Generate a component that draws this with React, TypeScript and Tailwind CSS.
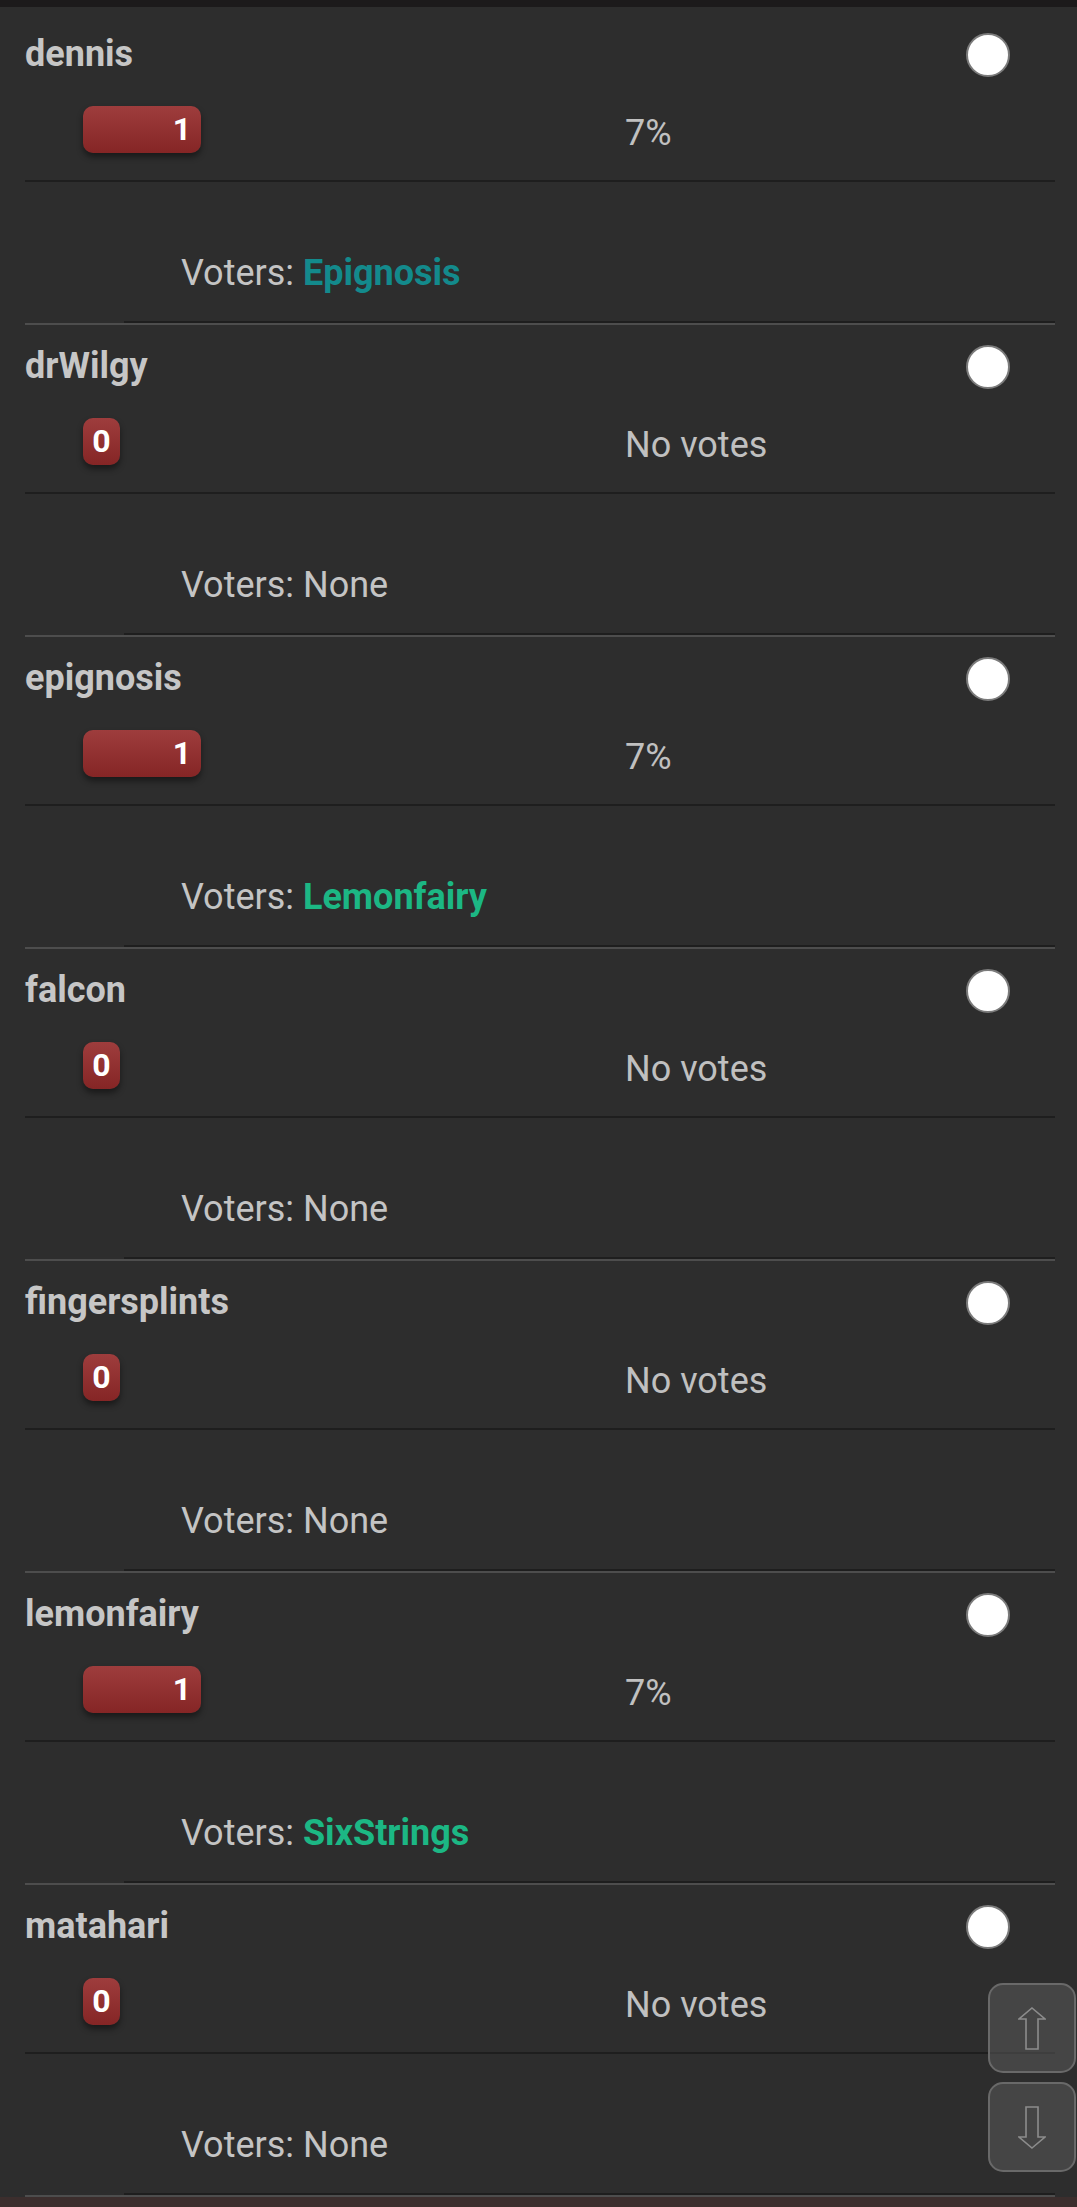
import React from "react";

type Entry = {
  name: string;
  votes: number;
  result: string;
  voter?: { name: string; color: string };
};

const entries: Entry[] = [
  { name: "dennis", votes: 1, result: "7%", voter: { name: "Epignosis", color: "text-[#138a8c]" } },
  { name: "drWilgy", votes: 0, result: "No votes" },
  { name: "epignosis", votes: 1, result: "7%", voter: { name: "Lemonfairy", color: "text-[#1cb784]" } },
  { name: "falcon", votes: 0, result: "No votes" },
  { name: "fingersplints", votes: 0, result: "No votes" },
  { name: "lemonfairy", votes: 1, result: "7%", voter: { name: "SixStrings", color: "text-[#1cb784]" } },
  { name: "matahari", votes: 0, result: "No votes" },
];

function Badge({ votes }: { votes: number }) {
  const base =
    "h-[47px] rounded-[10px] bg-gradient-to-b from-[#9e3d3d] to-[#852525] shadow-[0_4px_6px_rgba(0,0,0,0.45)] text-white font-bold text-[32px] leading-[47px]";
  if (votes > 0) {
    return <div className={`${base} w-[118px] text-right pr-[10px]`}>{votes}</div>;
  }
  return <div className={`${base} w-[37px] text-center`}>{votes}</div>;
}

function Row({ entry, first }: { entry: Entry; first: boolean }) {
  return (
    <div className={`mx-[25px] mr-[22px] border-b-2 border-[#4d4d4d] ${first ? "pt-[26px]" : "pt-[20px]"}`}>
      <div className="border-b-2 border-[#1e1e1e] pb-[27px]">
        <div className="flex items-start justify-between pr-[45px] h-[44px]">
          <div className="text-[36px] leading-[42px] font-bold text-[#c6c6c6]">{entry.name}</div>
          <div className="w-[44px] h-[44px] rounded-full bg-white border-2 border-[#7b7b7b]" />
        </div>
        <div className="flex items-start mt-[29px] h-[47px]">
          <div className="w-[600px] pl-[58px]">
            <Badge votes={entry.votes} />
          </div>
          <div className="mt-[6px] text-[36px] leading-[42px] text-[#c0c0c0]">{entry.result}</div>
        </div>
      </div>
      <div className="ml-[99px] pl-[57px] pt-[70px] pb-[27px] border-b-2 border-[#1e1e1e]">
        <div className="text-[36px] leading-[42px] text-[#c4c4c4]">
          Voters:{" "}
          {entry.voter ? (
            <span className={`font-bold ${entry.voter.color}`}>{entry.voter.name}</span>
          ) : (
            <span>None</span>
          )}
        </div>
      </div>
    </div>
  );
}

function ArrowUp() {
  return (
    <svg width="28" height="43" viewBox="0 0 28 43" fill="none">
      <path d="M14 1 L27 12 L20 12 L20 42 L8 42 L8 12 L1 12 Z" stroke="#8c8c8c" strokeWidth="1.6" strokeLinejoin="miter" />
    </svg>
  );
}

function ArrowDown() {
  return (
    <svg width="28" height="43" viewBox="0 0 28 43" fill="none">
      <path d="M14 42 L27 31 L20 31 L20 1 L8 1 L8 31 L1 31 Z" stroke="#8c8c8c" strokeWidth="1.6" strokeLinejoin="miter" />
    </svg>
  );
}

export default function App() {
  return (
    <div className="relative w-[1077px] h-[2207px] overflow-hidden bg-[#2d2d2d] font-['Roboto',sans-serif]">
      <div className="h-[7px] bg-[#1c1a1b]" />
      {entries.map((e, i) => (
        <Row key={e.name} entry={e} first={i === 0} />
      ))}
      <div className="absolute left-0 right-0 bottom-0 h-[10px] bg-[#3c2e2d]" />
      <div className="absolute right-[1px] top-[1983px] flex flex-col gap-[9px]">
        <div className="w-[88px] h-[90px] rounded-[15px] border-2 border-[#696969] bg-[rgba(90,90,90,0.55)] flex items-center justify-center">
          <ArrowUp />
        </div>
        <div className="w-[88px] h-[90px] rounded-[15px] border-2 border-[#696969] bg-[rgba(90,90,90,0.55)] flex items-center justify-center">
          <ArrowDown />
        </div>
      </div>
    </div>
  );
}
